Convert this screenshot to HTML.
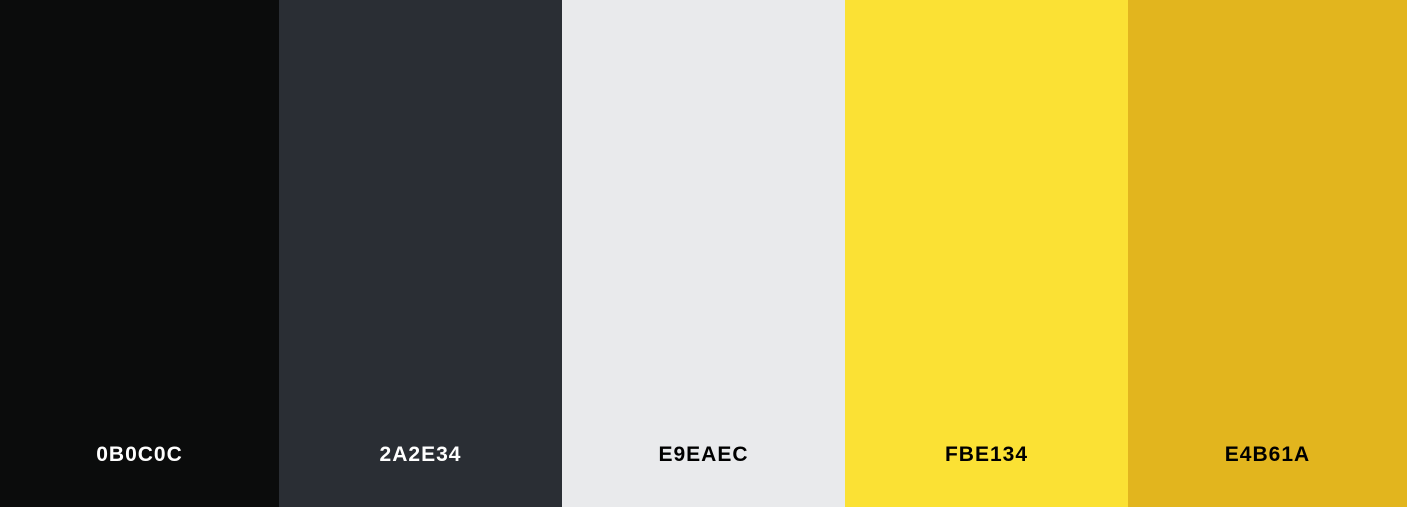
<!DOCTYPE html>
<html><head><meta charset="utf-8"><style>
html,body{margin:0;padding:0;width:1407px;height:507px;overflow:hidden;}
.c{position:absolute;top:0;height:507px;}
.c span{position:absolute;left:0;right:0;top:443px;text-align:center;font:bold 21px "Liberation Sans",sans-serif;letter-spacing:1px;}
</style></head><body>
<div class="c" style="left:0;width:279px;background:#0B0C0C"><span style="color:#fff">0B0C0C</span></div>
<div class="c" style="left:279px;width:283px;background:#2A2E34"><span style="color:#fff">2A2E34</span></div>
<div class="c" style="left:562px;width:283px;background:#E9EAEC"><span style="color:#000">E9EAEC</span></div>
<div class="c" style="left:845px;width:283px;background:#FBE134"><span style="color:#000">FBE134</span></div>
<div class="c" style="left:1128px;width:279px;background:#E2B51E"><span style="color:#000">E4B61A</span></div>
</body></html>
